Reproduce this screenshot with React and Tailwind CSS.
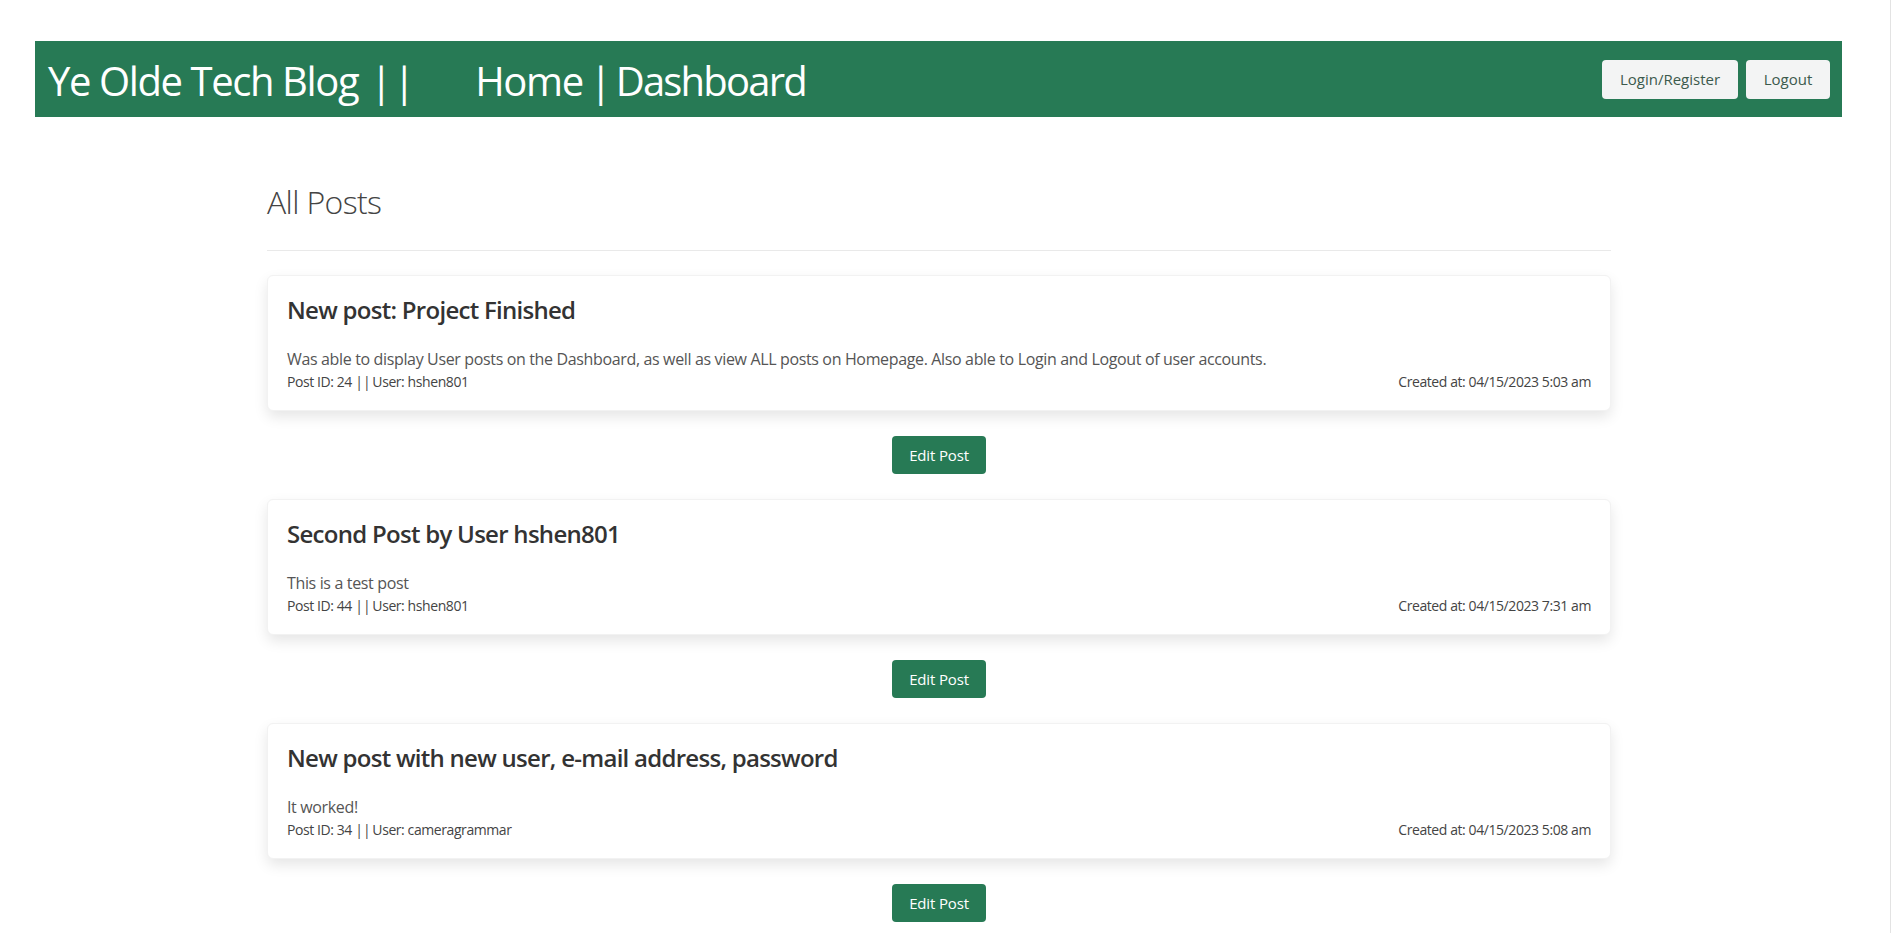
import React from "react";

const posts = [
  {
    title: "New post: Project Finished",
    body: "Was able to display User posts on the Dashboard, as well as view ALL posts on Homepage. Also able to Login and Logout of user accounts.",
    id: 24,
    user: "hshen801",
    created: "04/15/2023 5:03 am",
  },
  {
    title: "Second Post by User hshen801",
    body: "This is a test post",
    id: 44,
    user: "hshen801",
    created: "04/15/2023 7:31 am",
  },
  {
    title: "New post with new user, e-mail address, password",
    body: "It worked!",
    id: 34,
    user: "cameragrammar",
    created: "04/15/2023 5:08 am",
  },
];

function Bar({ className }) {
  return <span className={"inline-block w-[14px] text-center " + className}>|</span>;
}

export default function App() {
  return (
    <div
      className="min-h-screen bg-white border-r border-[#e3e3e3] pt-[41px] pb-[40px]"
      style={{ fontFamily: '"Open Sans", "Noto Sans", Arial, sans-serif' }}
    >
      <header className="ml-[35px] mr-[48px] h-[76px] bg-[#277a55] flex items-center justify-between pl-[13px] pr-[12px]">
        <div className="flex items-center pt-[4px] text-white text-[40px] leading-[48px] tracking-[-0.035em] whitespace-nowrap">
          <span>Ye Olde Tech Blog</span>
          <Bar className="ml-[12px]" />
          <Bar className="ml-[9px]" />
          <nav className="ml-[68px] flex items-center">
            <span>Home</span>
            <Bar className="ml-[7px]" />
            <span className="ml-[12px] tracking-[-0.045em]">Dashboard</span>
          </nav>
        </div>
        <div className="flex items-center gap-[8px]">
          <button className="h-[39px] w-[136px] rounded-[4px] bg-[#f3f4f4] text-[#3c5a4c] text-[15px]">
            Login/Register
          </button>
          <button className="h-[39px] w-[84px] rounded-[4px] bg-[#f3f4f4] text-[#3c5a4c] text-[15px]">
            Logout
          </button>
        </div>
      </header>

      <main className="ml-[267px] w-[1344px]">
        <h2 className="mt-[66px] text-[32px] leading-[38px] font-light text-[#444] tracking-[-0.02em]">
          All Posts
        </h2>
        <hr className="mt-[29px] border-t border-[#e9e9e9]" />
        <div className="mt-[24px] flex flex-col">
          {posts.map((p) => (
            <div key={p.id} className="flex flex-col items-center">
              <article className="w-full bg-white rounded-[6px] border border-[#f2f2f2] shadow-[0_6px_14px_rgba(0,0,0,0.10)] px-[19px] pt-[19px] pb-[18px]">
                <h3 className="text-[24px] leading-[29px] font-semibold text-[#333] tracking-[-0.03em]">
                  {p.title}
                </h3>
                <p className="mt-[23px] text-[16px] leading-[24px] text-[#555] tracking-[-0.022em]">
                  {p.body}
                </p>
                <div className="mt-[1px] flex justify-between text-[14px] leading-[20px] text-[#444] tracking-[-0.03em]">
                  <span className="whitespace-nowrap">
                    Post ID: {p.id} <span className="tracking-[-0.12em]">| |</span> User: {p.user}
                  </span>
                  <span>Created at: {p.created}</span>
                </div>
              </article>
              <button className="mt-[25px] mb-[25px] h-[38px] w-[94px] rounded-[4px] bg-[#277a55] text-white text-[15px] tracking-[-0.01em]">
                Edit Post
              </button>
            </div>
          ))}
        </div>
      </main>
    </div>
  );
}
